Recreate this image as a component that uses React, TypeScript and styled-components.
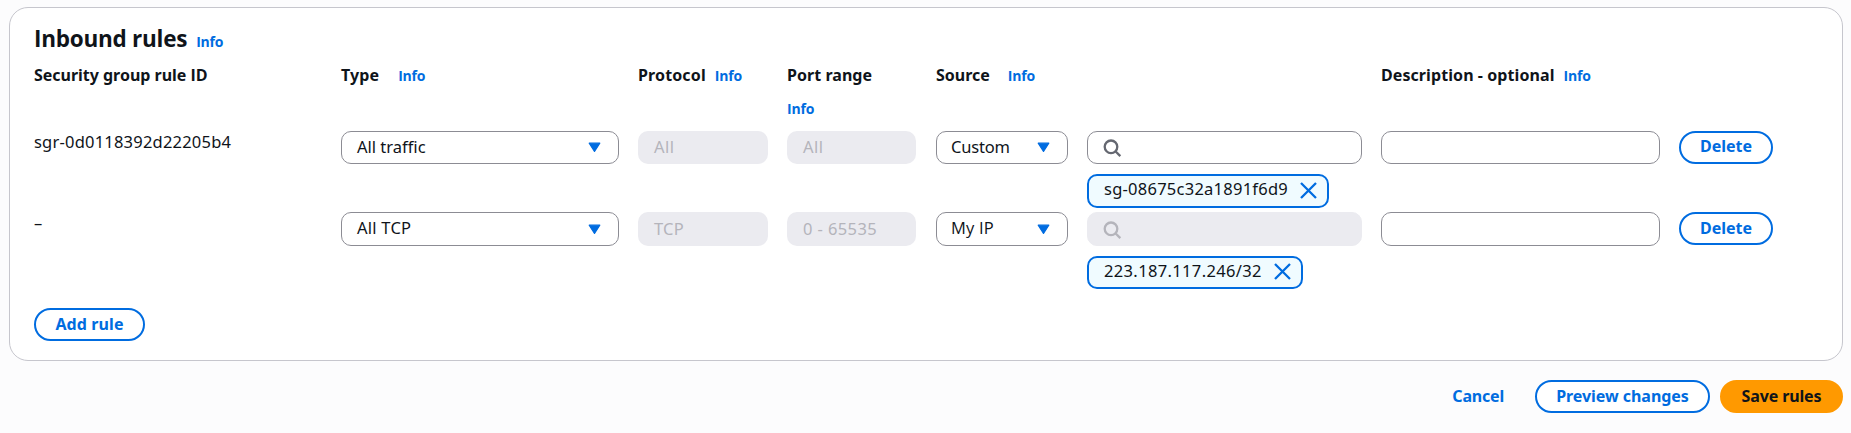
import React from 'react';
import styled, { createGlobalStyle } from 'styled-components';

const BLUE = '#006ce0';
const INK = '#0f141a';

const GlobalStyle = createGlobalStyle`
  * { box-sizing: border-box; }
  body {
    margin: 0;
    background: #fcfcfd;
    color: ${INK};
    font: 400 16.5px/23px 'Noto Sans', 'Open Sans', sans-serif;
  }
`;

const Page = styled.main`
  display: flex;
  flex-direction: column;
  gap: 19px;
  height: 433px;
  padding: 7px 8px 0 9px;
`;

const Card = styled.section`
  height: 354px;
  padding: 15px 24px 0;
  border: 1px solid #c6c6cd;
  border-radius: 19px;
  background: #fff;
`;

const TitleRow = styled.header`
  display: flex;
  align-items: baseline;
  gap: 9px;
  height: 41px;
`;

const Title = styled.h2`
  margin: 0;
  font: 700 22.5px/31px 'Open Sans', 'Noto Sans', sans-serif;
  letter-spacing: -0.25px;
`;

const Info = styled.a`
  color: ${BLUE};
  font: 700 14px/19px 'Open Sans', 'Noto Sans', sans-serif;
  letter-spacing: -0.2px;
`;

const RuleGrid = styled.div<{ $height: number }>`
  display: grid;
  grid-template-columns: 288px 278px 130px 130px 132px 275px 279px 94px;
  column-gap: 19px;
  align-items: start;
  height: ${(p) => p.$height}px;
`;

const HeaderCell = styled.div<{ $gap?: number; $stacked?: boolean }>`
  display: flex;
  flex-direction: ${(p) => (p.$stacked ? 'column' : 'row')};
  align-items: ${(p) => (p.$stacked ? 'flex-start' : 'baseline')};
  gap: ${(p) => p.$gap ?? 9}px;
  white-space: nowrap;
`;

const Label = styled.span<{ $track?: number }>`
  font-size: 16px;
  font-weight: 700;
  line-height: 22px;
  letter-spacing: ${(p) => p.$track ?? 0}px;
`;

const Sans = styled.span`
  font-family: 'Open Sans', 'Noto Sans', sans-serif;
`;

const RuleId = styled.div<{ $track?: number }>`
  margin-top: -1px;
  letter-spacing: ${(p) => p.$track ?? 0}px;
`;

const Select = styled.div<{ $tall?: boolean; $inset: number }>`
  display: flex;
  justify-content: space-between;
  align-items: flex-start;
  height: ${(p) => (p.$tall ? 34 : 33)}px;
  padding: 3px 17px 0 ${(p) => p.$inset}px;
  border: 1px solid #8c8c94;
  border-radius: 10px;
  background: #fff;
  white-space: nowrap;

  svg { margin-top: ${(p) => (p.$tall ? 8 : 7)}px; }
`;

const Value = styled.span<{ $track?: number }>`
  letter-spacing: ${(p) => (p.$track ? `${p.$track}px` : 'normal')};
`;

const Disabled = styled.div<{ $tall?: boolean; $width: number }>`
  width: ${(p) => p.$width}px;
  height: ${(p) => (p.$tall ? 34 : 33)}px;
  padding: ${(p) => (p.$tall ? 5 : 4)}px 0 0 16px;
  border-radius: 10px;
  background: #ebebf0;
  color: #b4b4bb;
`;

const Field = styled.div<{ $tall?: boolean; $disabled?: boolean }>`
  display: flex;
  align-items: flex-start;
  height: ${(p) => (p.$tall ? 34 : 33)}px;
  padding: ${(p) => (p.$tall ? 8 : 7)}px 0 0 15px;
  border: 1px solid ${(p) => (p.$disabled ? '#ebebf0' : '#8c8c94')};
  border-radius: 10px;
  background: ${(p) => (p.$disabled ? '#ebebf0' : '#fff')};
  color: ${(p) => (p.$disabled ? '#b4b4bb' : '#656871')};
`;

const SearchCell = styled.div`
  display: flex;
  flex-direction: column;
  gap: 10px;
  align-items: flex-start;

  ${Field} { width: 100%; }
`;

const Token = styled.div<{ $width: number; $tall?: boolean }>`
  display: flex;
  justify-content: space-between;
  align-items: flex-start;
  width: ${(p) => p.$width}px;
  height: ${(p) => (p.$tall ? 34 : 33)}px;
  padding: 1px 10px 0 15px;
  border: 2px solid ${BLUE};
  border-radius: 10px;
  background: #f0fbff;
  white-space: nowrap;

  svg { margin-top: ${(p) => (p.$tall ? 5 : 4)}px; }
`;

const Button = styled.button<{ $width: number; $drop?: number; $primary?: boolean; $track?: number }>`
  display: flex;
  justify-content: center;
  align-items: flex-start;
  width: ${(p) => p.$width}px;
  height: 33px;
  padding: ${(p) => p.$drop ?? 3}px 0 0;
  border: 2px solid ${(p) => (p.$primary ? '#ff9900' : BLUE)};
  border-radius: 17px;
  background: ${(p) => (p.$primary ? '#ff9900' : '#fff')};
  color: ${(p) => (p.$primary ? INK : BLUE)};
  font: 700 16px/22px 'Noto Sans', sans-serif;
  letter-spacing: ${(p) => p.$track ?? 0}px;
  white-space: nowrap;
`;

const Footer = styled.footer`
  display: flex;
  justify-content: flex-end;
  gap: 10px;
`;

const Cancel = styled.a`
  margin-right: 21px;
  padding-top: 5px;
  color: ${BLUE};
  font-size: 16px;
  font-weight: 700;
  line-height: 22px;
  letter-spacing: -0.2px;
`;

const Caret = () => (
  <svg width="13" height="11" viewBox="0 0 13 11">
    <path d="M1.2 1.2H11.8L6.5 9.4Z" fill={BLUE} stroke={BLUE} strokeWidth="1.2" strokeLinejoin="round" />
  </svg>
);

const SearchIcon = () => (
  <svg width="20" height="20" viewBox="0 0 20 20" fill="none" stroke="currentColor" strokeWidth="2.3">
    <circle cx="8" cy="7.8" r="6.3" />
    <path d="M12.4 12.2L17.3 17.1" />
  </svg>
);

const CloseIcon = () => (
  <svg width="17" height="17" viewBox="0 0 17 17" fill="none" stroke={BLUE} strokeWidth="2.3">
    <path d="M1 1L16 16M16 1L1 16" />
  </svg>
);

export default function App() {
  return (
    <>
      <GlobalStyle />
      <Page>
        <Card>
          <TitleRow>
            <Title>Inbound rules</Title>
            <Info>Info</Info>
          </TitleRow>

          <RuleGrid $height={67}>
            <HeaderCell>
              <Label $track={-0.02}>Security group rule <Sans>ID</Sans></Label>
            </HeaderCell>
            <HeaderCell $gap={19}>
              <Label $track={0.1}>Type</Label>
              <Info>Info</Info>
            </HeaderCell>
            <HeaderCell>
              <Label $track={0.13}>Protocol</Label>
              <Info>Info</Info>
            </HeaderCell>
            <HeaderCell $stacked $gap={13}>
              <Label $track={0.04}>Port range</Label>
              <Info>Info</Info>
            </HeaderCell>
            <HeaderCell $gap={18}>
              <Label>Source</Label>
              <Info>Info</Info>
            </HeaderCell>
            <div />
            <HeaderCell>
              <Label $track={0.08}>Description - optional</Label>
              <Info>Info</Info>
            </HeaderCell>
          </RuleGrid>

          <RuleGrid $height={81}>
            <RuleId $track={0.21}>sgr-0d0118392d22205b4</RuleId>
            <Select $inset={15}><Value>All traffic</Value><Caret /></Select>
            <Disabled $width={130}><Value $track={0.5}>All</Value></Disabled>
            <Disabled $width={129}><Value $track={0.5}>All</Value></Disabled>
            <Select $inset={14}><Value $track={-0.2}>Custom</Value><Caret /></Select>
            <SearchCell>
              <Field><SearchIcon /></Field>
              <Token $width={242} $tall><Value $track={0.25}>sg-08675c32a1891f6d9</Value><CloseIcon /></Token>
            </SearchCell>
            <Field />
            <Button $width={94} $drop={2}>Delete</Button>
          </RuleGrid>

          <RuleGrid $height={96}>
            <RuleId>–</RuleId>
            <Select $tall $inset={15}><Value $track={0.25}>All TCP</Value><Caret /></Select>
            <Disabled $tall $width={130}><Value $track={0.2}>TCP</Value></Disabled>
            <Disabled $tall $width={129}><Value $track={0.4}>0 - 65535</Value></Disabled>
            <Select $tall $inset={14}><Value as={Sans} $track={0.2}>My IP</Value><Caret /></Select>
            <SearchCell>
              <Field $tall $disabled><SearchIcon /></Field>
              <Token $width={216}><Value $track={0.35}>223.187.117.246/32</Value><CloseIcon /></Token>
            </SearchCell>
            <Field $tall />
            <Button $width={94} $drop={3}>Delete</Button>
          </RuleGrid>

          <Button $width={111} $track={0.1}>Add rule</Button>
        </Card>

        <Footer>
          <Cancel>Cancel</Cancel>
          <Button $width={175} $track={-0.05}>Preview changes</Button>
          <Button $width={123} $primary $track={-0.12}>Save rules</Button>
        </Footer>
      </Page>
    </>
  );
}
